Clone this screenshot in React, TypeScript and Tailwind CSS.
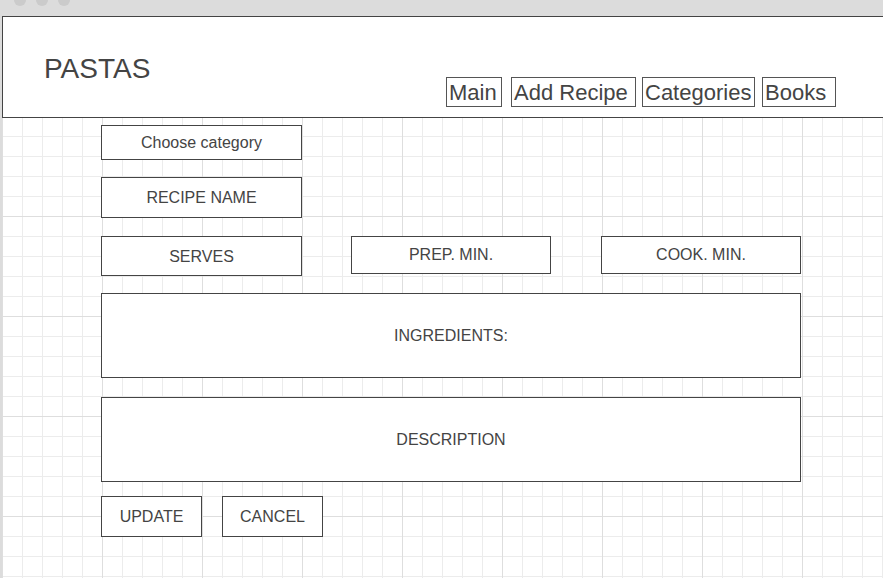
import React from 'react';

const NAV = [
  { label: 'Main', w: 'w-[56px]', ml: 'ml-0' },
  { label: 'Add Recipe', w: 'w-[125px]', ml: 'ml-[9px]' },
  { label: 'Categories', w: 'w-[113px]', ml: 'ml-[6px]' },
  { label: 'Books', w: 'w-[74px]', ml: 'ml-[7px]' },
];

// plain wireframe box with centered caption
function Box({ label, className = '' }: { label: string; className?: string }) {
  return (
    <div className={`flex items-center justify-center border border-[#444] bg-white text-[16px] text-[#444] ${className}`}>
      {label}
    </div>
  );
}

export default function App() {
  return (
    <div className="flex h-[578px] w-[883px] flex-col overflow-hidden bg-[#dcdcdc] font-['Liberation_Sans',Arial,sans-serif]">
      {/* window title bar */}
      <div className="flex h-[16px] shrink-0 gap-[10px] pl-[14px]">
        <span className="-mt-[6px] h-[12px] w-[12px] rounded-full bg-[#cbcbcb]" />
        <span className="-mt-[6px] h-[12px] w-[12px] rounded-full bg-[#cbcbcb]" />
        <span className="-mt-[6px] h-[12px] w-[12px] rounded-full bg-[#cbcbcb]" />
      </div>

      {/* canvas with grid */}
      <div className="ml-[2px] flex flex-1 flex-col bg-white bg-[linear-gradient(to_right,#dedede_1px,transparent_1px),linear-gradient(to_bottom,#dedede_1px,transparent_1px),linear-gradient(to_right,#ececec_1px,transparent_1px),linear-gradient(to_bottom,#ececec_1px,transparent_1px)] bg-[size:100px_100px,100px_100px,20px_20px,20px_20px]">
        <header className="flex h-[102px] shrink-0 border-y border-l border-[#444] bg-white pl-[41px]">
          <div className="mt-[38px] w-[402px] text-[28px] leading-none text-[#444]">PASTAS</div>
          <nav className="mt-[60px] flex items-start">
            {NAV.map((n) => (
              <div
                key={n.label}
                className={`h-[30px] border border-[#555] pl-[2px] text-[22px] leading-[30px] text-[#444] ${n.w} ${n.ml}`}
              >
                {n.label}
              </div>
            ))}
          </nav>
        </header>

        <div className="ml-[99px] mt-[7px] flex flex-col">
          <Box label="Choose category" className="h-[35px] w-[201px]" />
          <Box label="RECIPE NAME" className="mt-[17px] h-[41px] w-[201px]" />

          <div className="mt-[18px] flex items-start">
            <Box label="SERVES" className="h-[40px] w-[201px] pt-[1px]" />
            <Box label="PREP. MIN." className="ml-[49px] h-[38px] w-[200px]" />
            <Box label="COOK. MIN." className="ml-[50px] h-[38px] w-[200px]" />
          </div>

          <Box label="INGREDIENTS:" className="mt-[17px] h-[85px] w-[700px]" />
          <Box label="DESCRIPTION" className="mt-[19px] h-[85px] w-[700px]" />

          <div className="mt-[14px] flex gap-[20px]">
            <Box label="UPDATE" className="h-[41px] w-[101px]" />
            <Box label="CANCEL" className="h-[41px] w-[101px]" />
          </div>
        </div>
      </div>
    </div>
  );
}
